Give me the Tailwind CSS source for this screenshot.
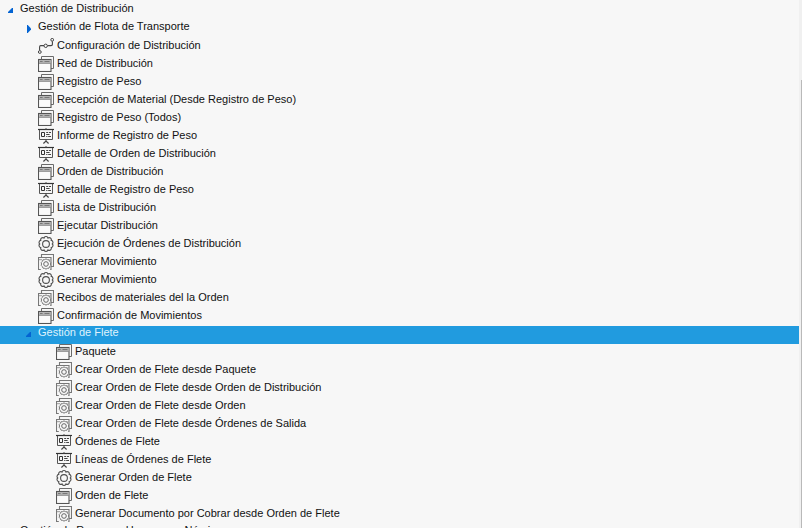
<!DOCTYPE html>
<html lang="es">
<head>
<meta charset="utf-8">
<title>Menú</title>
<script src="https://cdn.jsdelivr.net/npm/@tailwindcss/browser@4"></script>
</head>
<body class="h-[528px] w-[802px] overflow-hidden bg-[#f7f7f7] font-['Liberation_Sans',Arial,sans-serif] text-[11px] leading-[14px] text-[#111]">
<svg class="hidden">
  <defs>
    <symbol id="window" viewBox="0 0 16 16">
      <path d="M3.5 3.5V.5h12v12H13" fill="none" stroke="#6a6a6a" stroke-width="1"/>
      <rect x=".5" y="3.5" width="12.5" height="12" fill="#fafafa" stroke="#555" stroke-width="1.1"/>
      <path d="M1 4h11.5v3H1z" fill="#b4b4b4"/>
      <path d="M2 5.5h2.6M6.5 5.5h5" stroke="#777" stroke-width="1"/>
      <path d="M1 7.4h11.6" stroke="#777" stroke-width=".8"/>
    </symbol>
    <symbol id="report" viewBox="0 0 16 16">
      <path d="M0 1.5h16" stroke="#333" stroke-width="1.2"/>
      <path d="M1.5 2v9.5h13V2M8 0v1.5" fill="none" stroke="#555" stroke-width="1"/>
      <path d="M8 11.5v2M5.4 15.5L8 13l2.6 2.5" fill="none" stroke="#444" stroke-width="1.2"/>
      <path d="M3.5 4.5h3v4h-3z" fill="none" stroke="#333" stroke-width="1"/>
      <path d="M8.2 4.5h2M11 4.5h2M8.2 6.5h3.4M8.2 8.5h1.2M10.2 8.5H13" stroke="#444" stroke-width="1"/>
    </symbol>
    <symbol id="gear" viewBox="0 0 16 16">
      <path d="M6 2A2.1 2.1 0 0 1 10 2A2.1 2.1 0 0 1 13.2 4.4A2.1 2.1 0 0 1 14.3 8A2.1 2.1 0 0 1 13.2 11.6A2.1 2.1 0 0 1 10 14A2.1 2.1 0 0 1 6 14A2.1 2.1 0 0 1 2.8 11.6A2.1 2.1 0 0 1 1.7 8A2.1 2.1 0 0 1 2.8 4.4A2.1 2.1 0 0 1 6 2Z" fill="none" stroke="#505050" stroke-width="1.1"/>
      <circle cx="8" cy="8" r="3.4" fill="none" stroke="#505050" stroke-width="1.1"/>
    </symbol>
    <symbol id="process" viewBox="0 0 16 16">
      <path d="M3.5 3.5V.5h12v12H13" fill="none" stroke="#777" stroke-width="1.1"/>
      <path d="M2.8 15.5H.5v-12H13v12h-.8" fill="none" stroke="#777" stroke-width="1.1"/>
      <path d="M1 5.7h3.2M11.4 5.7h1.2" stroke="#999" stroke-width="1"/>
      <path d="M6.6 5.6Q8 4.2 9.4 5.6Q11.5 5.3 11.6 7.3Q13.4 8.3 12.5 10Q13.4 11.7 11.6 12.7Q11.5 14.7 9.4 14.4Q8 15.8 6.6 14.4Q4.5 14.7 4.4 12.7Q2.6 11.7 3.5 10Q2.6 8.3 4.4 7.3Q4.5 5.3 6.6 5.6Z" fill="#f7f7f7" stroke="#777" stroke-width="1"/>
      <circle cx="8" cy="10" r="2.3" fill="none" stroke="#666" stroke-width="1"/>
    </symbol>
    <symbol id="flow" viewBox="0 0 16 16">
      <path d="M1.6 12.5V9Q1.6 7.6 2.7 7.6H6M9.4 7.6H13Q14.4 7.6 14.4 6.6V3.2" fill="none" stroke="#444" stroke-width="1.1"/>
      <g fill="#f7f7f7" stroke="#444" stroke-width="1"><circle cx="1.8" cy="14" r="1.4"/><circle cx="7.7" cy="7.8" r="1.7"/><circle cx="14.2" cy="1.8" r="1.4"/></g>
    </symbol>
    <symbol id="open" viewBox="0 0 5 5"><path d="M5 0v5H0V4L4 0z" fill="#0464d2"/></symbol>
    <symbol id="closed" viewBox="0 0 5 8"><path d="M1 0H1.8L5 3.4V4.6L1.8 8H1z" fill="#0464d2"/></symbol>
  </defs>
</svg>
<div class="flex h-full">
  <ul id="tree" class="w-[799px] shrink-0 pt-[2px]"></ul>
  <div class="flex w-[3px] shrink-0 flex-col items-end bg-[#f0f0f0] pt-[80px]"><div class="w-[1px] grow bg-[#b9b9b9]"></div></div>
</div>
<script>
const rows = [
  ['open', 0, 'Gestión de Distribución'],
  ['closed', 1, 'Gestión de Flota de Transporte'],
  ['flow', 1, 'Configuración de Distribución'],
  ['window', 1, 'Red de Distribución'],
  ['window', 1, 'Registro de Peso'],
  ['window', 1, 'Recepción de Material (Desde Registro de Peso)'],
  ['window', 1, 'Registro de Peso (Todos)'],
  ['report', 1, 'Informe de Registro de Peso'],
  ['report', 1, 'Detalle de Orden de Distribución'],
  ['window', 1, 'Orden de Distribución'],
  ['report', 1, 'Detalle de Registro de Peso'],
  ['window', 1, 'Lista de Distribución'],
  ['window', 1, 'Ejecutar Distribución'],
  ['gear', 1, 'Ejecución de Órdenes de Distribución'],
  ['process', 1, 'Generar Movimiento'],
  ['gear', 1, 'Generar Movimiento'],
  ['process', 1, 'Recibos de materiales del la Orden'],
  ['window', 1, 'Confirmación de Movimientos'],
  ['open', 1, 'Gestión de Flete', true],
  ['window', 2, 'Paquete'],
  ['process', 2, 'Crear Orden de Flete desde Paquete'],
  ['process', 2, 'Crear Orden de Flete desde Orden de Distribución'],
  ['process', 2, 'Crear Orden de Flete desde Orden'],
  ['process', 2, 'Crear Orden de Flete desde Órdenes de Salida'],
  ['report', 2, 'Órdenes de Flete'],
  ['report', 2, 'Líneas de Órdenes de Flete'],
  ['gear', 2, 'Generar Orden de Flete'],
  ['window', 2, 'Orden de Flete'],
  ['process', 2, 'Generar Documento por Cobrar desde Orden de Flete'],
  ['closed', 0, 'Gestión de Recursos Humanos y Nómina'],
];
const indent = ['pl-[2px]', 'pl-[20px]', 'pl-[38px]'];
document.getElementById('tree').innerHTML = rows.map(([icon, level, label, selected]) => {
  const bg = selected ? 'bg-[#219bdf] text-[#dff2fc]' : '';
  if (icon === 'open' || icon === 'closed') {
    const arrow = icon === 'open'
      ? '<svg class="mt-[6px] ml-[6px] h-[5px] w-[5px]"><use href="#open"/></svg>'
      : '<svg class="mt-[5px] ml-[6px] h-[8px] w-[5px]"><use href="#closed"/></svg>';
    return `<li class="flex h-[18px] items-start whitespace-nowrap ${indent[level]} ${bg}"><span class="w-[18px] shrink-0">${arrow}</span><span class="-mt-px">${label}</span></li>`;
  }
  return `<li class="flex h-[18px] items-start gap-[3px] whitespace-nowrap ${indent[level]}"><svg class="ml-[18px] h-[16px] w-[16px] shrink-0"><use href="#${icon}"/></svg><span>${label}</span></li>`;
}).join('');
</script>
</body>
</html>
